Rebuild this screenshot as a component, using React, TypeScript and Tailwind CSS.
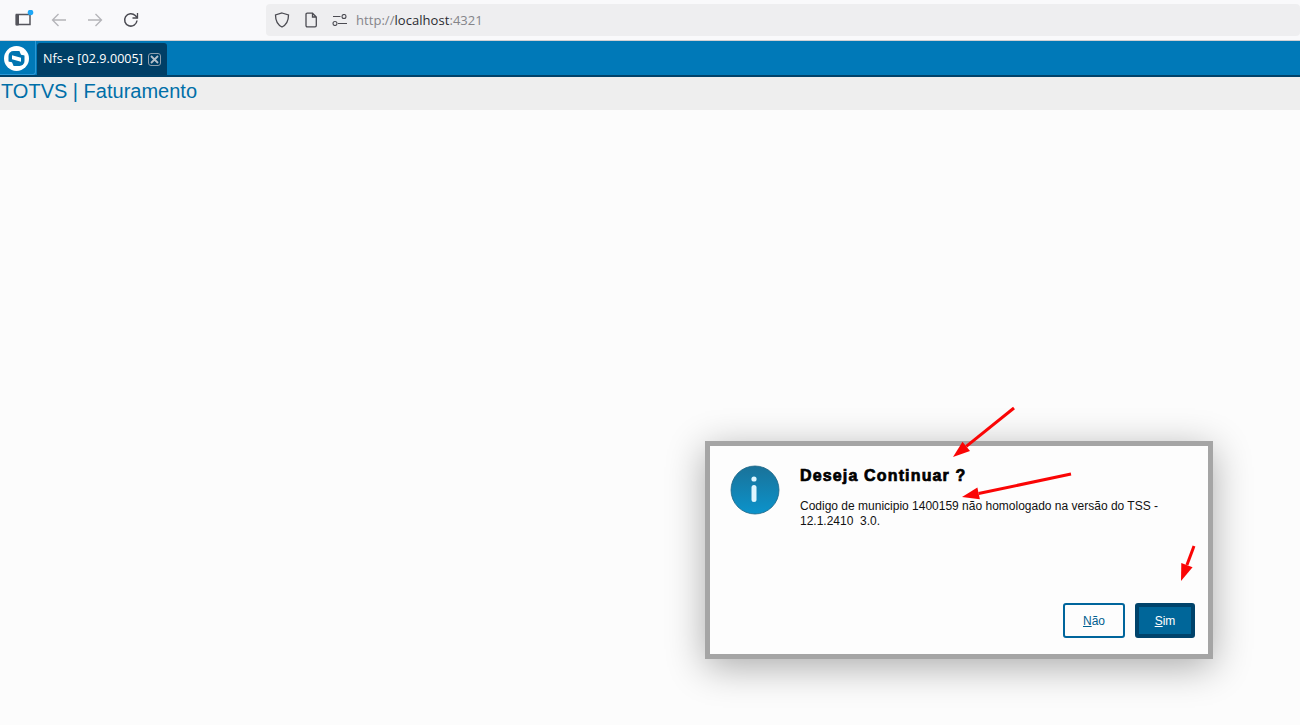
import React from "react";

function Arrow({ x1, y1, x2, y2, w = 3 }: { x1: number; y1: number; x2: number; y2: number; w?: number }) {
  const dx = x2 - x1;
  const dy = y2 - y1;
  const l = Math.hypot(dx, dy);
  const ux = dx / l;
  const uy = dy / l;
  const hl = 17;
  const hw = 6;
  const bx = x2 - ux * hl;
  const by = y2 - uy * hl;
  return (
    <g fill="#fa0505" stroke="none">
      <line x1={x1} y1={y1} x2={bx} y2={by} stroke="#fa0505" strokeWidth={w} />
      <polygon points={`${x2},${y2} ${bx - uy * hw},${by + ux * hw} ${bx + uy * hw},${by - ux * hw}`} />
    </g>
  );
}

export default function App() {
  return (
    <div className="relative h-[725px] w-[1300px] overflow-hidden bg-[#fcfcfc] font-['Liberation_Sans',Arial,sans-serif]">
      {/* Browser toolbar */}
      <div className="flex h-[41px] items-center border-b border-[#d0d0d4] bg-[#f9f9fb]">
        <div className="relative ml-[15px] h-[16px] w-[17px]">
          <svg width="20" height="20" viewBox="0 0 20 20" className="absolute -top-[2px] left-0">
            <path d="M1.500 4.500H15V14.500H1.500Z" fill="none" stroke="#55555c" strokeWidth="1.500" />
            <rect x="0.500" y="4" width="3.500" height="11.500" rx="1" fill="#55555c" />
            <circle cx="15.500" cy="2.500" r="2.800" fill="#1ea7f7" />
          </svg>
        </div>
        <svg width="18" height="18" viewBox="0 0 18 18" className="ml-[18px]" fill="none" stroke="#b4b4b8" strokeWidth="1.300">
          <path d="M16 9H2.500M8.500 3 2.500 9l6 6" />
        </svg>
        <svg width="18" height="18" viewBox="0 0 18 18" className="ml-[18px]" fill="none" stroke="#b4b4b8" strokeWidth="1.300">
          <path d="M2 9h13.500M9.500 3l6 6-6 6" />
        </svg>
        <svg width="18" height="18" viewBox="0 0 18 18" className="ml-[18px]" fill="none" stroke="#4b4b52" strokeWidth="1.500">
          <path d="M15 9.500A6.200 6.200 0 1 1 13.300 4.600L15.300 6.600" />
          <path d="M15.500 2v5h-5" strokeWidth="1.300" />
        </svg>
        <div className="ml-[126px] flex h-[32px] w-[1034px] items-center rounded-[4px] bg-[#eeeef0]">
          <svg width="16" height="16" viewBox="0 0 16 16" className="ml-[8px]" fill="none" stroke="#4b4b52" strokeWidth="1.300">
            <path d="M8 1 14.500 3c0 6-1.500 9.500-6.500 12C3 12.500 1.500 9 1.500 3z" />
          </svg>
          <svg width="14" height="16" viewBox="0 0 14 16" className="ml-[14px]" fill="none" stroke="#4b4b52" strokeWidth="1.300">
            <path d="M2 2.500C2 1.700 2.500 1.200 3.300 1.200H8.500L12.300 5V13.500C12.300 14.300 11.800 14.800 11 14.800H3.300C2.500 14.800 2 14.300 2 13.500zM8.500 1.200V5H12.300" />
          </svg>
          <svg width="16" height="12" viewBox="0 0 16 12" className="ml-[14px]" fill="none" stroke="#4b4b52" strokeWidth="1.100">
            <path d="M1 3.500H8.500M6 10.500H15" transform="translate(0 -1)" />
            <circle cx="12" cy="2.500" r="2" />
            <circle cx="3" cy="9.500" r="2" />
          </svg>
          <div className="ml-[8px] text-[13px] leading-none font-['Open_Sans',sans-serif] tracking-[0.05px] text-[#85858a]">
            http://<span className="text-[#2b2b30]">localhost</span>:4321
          </div>
        </div>
      </div>

      {/* App tab bar */}
      <div className="flex h-[34px] items-end bg-[#0079b8]">
        <div className="flex h-[34px] w-[36px] items-center justify-center rounded-br-[3px] border-r border-b border-[#2c97d6] pr-[2px] pt-[1px]">
          <svg width="25" height="25" viewBox="0 0 25 25">
            <circle cx="12.500" cy="12.500" r="12.500" fill="#fff" />
            <rect x="4.500" y="5" width="16" height="15" rx="5" fill="#0074b0" />
            <path d="M8 9.200 17 11.800V15.800L8 13.200Z" fill="#fff" />
            <path d="M15 4 20.500 4 21 9.500 17 8.800Z" fill="#fff" />
            <path d="M4 15.500 8 16.200 10 21H4.500Z" fill="#fff" />
          </svg>
        </div>
        <div className="ml-[1px] flex h-[32px] w-[130px] items-center rounded-t-[3px] bg-[#003f66] pl-[6px]">
          <span className="text-[12.500px] font-['Open_Sans','Liberation_Sans',sans-serif] text-white tracking-[0.08px] whitespace-nowrap">
            Nfs-e [02.9.0005]
          </span>
          <span className="ml-[5px] flex h-[13px] w-[13px] items-center justify-center rounded-[3px] border border-[#8d9fae]">
            <svg width="9" height="9" viewBox="0 0 9 9" stroke="#b4c0ca" strokeWidth="1.800">
              <path d="M1 1l7 7M8 1 1 8" />
            </svg>
          </span>
        </div>
      </div>
      <div className="h-[2px] bg-[#00426a]" />

      {/* Title bar */}
      <div className="flex h-[33px] items-start bg-[#eeeeee] pl-[1px] pt-[1px] text-[20px] leading-[26px] text-[#006fa8]">
        TOTVS | Faturamento
      </div>

      {/* Content */}
      <div className="flex justify-end pr-[87px] pt-[331px]">
        <div className="flex h-[218px] w-[508px] flex-col border-[5px] border-[#a5a5a5] bg-[#fdfdfd] shadow-[0_8px_36px_rgba(0,0,0,0.32)]">
          <div className="flex flex-1 pl-[20px] pt-[19px]">
            <svg width="50" height="50" viewBox="0 0 50 50" className="shrink-0">
              <defs>
                <linearGradient id="infoGrad" x1="0" y1="0" x2="0" y2="1">
                  <stop offset="0" stopColor="#1a7299" />
                  <stop offset="1" stopColor="#0b93cb" />
                </linearGradient>
              </defs>
              <circle cx="25" cy="25" r="24" fill="url(#infoGrad)" stroke="#1c6585" strokeWidth="0.800" />
              <circle cx="24" cy="14" r="2.600" fill="#dff6ff" />
              <rect x="21.500" y="20" width="5" height="17" rx="2.500" fill="#dff6ff" />
            </svg>
            <div className="ml-[20px] w-[370px] -mt-[1px]">
              <div className="text-[16px] leading-[24px] font-bold text-black [-webkit-text-stroke:0.7px_black] tracking-[1.150px] whitespace-nowrap">
                Deseja Continuar ?
              </div>
              <div className="mt-[11px] w-[370px] text-[12px] leading-[15px] text-[#111] whitespace-pre-wrap">
                Codigo de municipio 1400159 não homologado na versão do TSS - 12.1.2410  3.0.
              </div>
            </div>
          </div>
          <div className="flex justify-end gap-[10px] pb-[16px] pr-[13px]">
            <button className="flex h-[35px] w-[62px] items-center justify-center rounded-[3px] border-2 border-[#00659c] bg-[#fdfdfd] text-[12px] text-[#00608f]">
              <span><span className="underline">N</span>ão</span>
            </button>
            <button className="flex h-[35px] w-[60px] items-center justify-center rounded-[3px] border-4 border-[#00436b] bg-[#006699] text-[12px] text-white">
              <span><span className="underline">S</span>im</span>
            </button>
          </div>
        </div>
      </div>

      {/* Annotation arrows */}
      <svg width="1300" height="725" className="pointer-events-none absolute left-0 top-0">
        <Arrow x1={1014} y1={408} x2={953} y2={457} />
        <Arrow x1={1071} y1={474} x2={962} y2={497} />
        <Arrow x1={1194} y1={546} x2={1181} y2={581} />
      </svg>
    </div>
  );
}
